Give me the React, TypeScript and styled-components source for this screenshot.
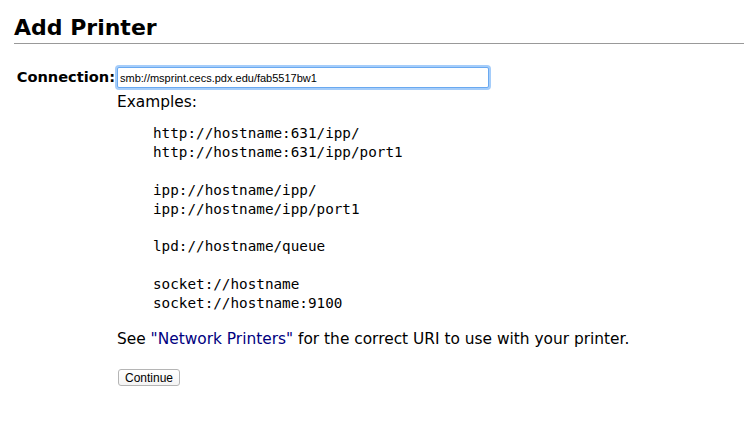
import React from "react";
import styled, { createGlobalStyle } from "styled-components";

const Global = createGlobalStyle`
  html, body { margin: 0; padding: 0; background: #fff; }
  body { font-family: "DejaVu Sans", "Liberation Sans", sans-serif; font-size: 15.4px; color: #000; }
`;

const Page = styled.div`
  padding: 14px 0 0 14px;
`;

const Title = styled.h2`
  margin: 0;
  font-size: 22px;
  font-weight: bold;
  line-height: 28px;
  padding-bottom: 1px;
  border-bottom: 1px solid #999;
`;

const Form = styled.div`
  display: grid;
  grid-template-columns: 101px 1fr;
  column-gap: 2px;
  margin-top: 23px;
`;

const Label = styled.div`
  font-weight: bold;
  text-align: right;
  font-size: 14.6px;
  line-height: 20px;
  white-space: nowrap;
`;

const Field = styled.div`
  display: flex;
  flex-direction: column;
  align-items: flex-start;
`;

const Input = styled.input`
  box-sizing: border-box;
  width: 372px;
  height: 21px;
  font-family: "Liberation Sans", Arial, sans-serif;
  font-size: 11px;
  padding: 1px 2px;
  border: 1px solid #6aa9f0;
  border-radius: 2px;
  box-shadow: 0 0 0 2px #a5cdfa;
  outline: none;
  color: #000;
`;

const Text = styled.p<{ $top?: number }>`
  margin: ${(p) => p.$top ?? 0}px 0 0 0;
  line-height: 20px;
`;

const Examples = styled.pre`
  margin: 12px 0 16px 36px;
  font-family: "DejaVu Sans Mono", "Liberation Mono", monospace;
  font-size: 14.3px;
  line-height: 18.9px;
`;

const Link = styled.a`
  color: #000080;
  text-decoration: none;
`;

const Button = styled.button`
  margin: 20px 0 0 1px;
  font-family: "Liberation Sans", Arial, sans-serif;
  font-size: 12px;
  height: 17px;
  padding: 0 6px;
  background: linear-gradient(#ffffff, #f4f4f4);
  border: 1px solid #b5b5b5;
  border-radius: 3px;
  color: #000;
`;

export default function App() {
  return (
    <Page>
      <Global />
      <Title>Add Printer</Title>
      <Form>
        <Label>Connection:</Label>
        <Field>
          <Input defaultValue="smb://msprint.cecs.pdx.edu/fab5517bw1" />
          <Text $top={4}>Examples:</Text>
          <Examples>{`http://hostname:631/ipp/
http://hostname:631/ipp/port1

ipp://hostname/ipp/
ipp://hostname/ipp/port1

lpd://hostname/queue

socket://hostname
socket://hostname:9100`}</Examples>
          <Text>
            See <Link href="#">"Network Printers"</Link> for the correct URI to use with your printer.
          </Text>
          <Button>Continue</Button>
        </Field>
      </Form>
    </Page>
  );
}
